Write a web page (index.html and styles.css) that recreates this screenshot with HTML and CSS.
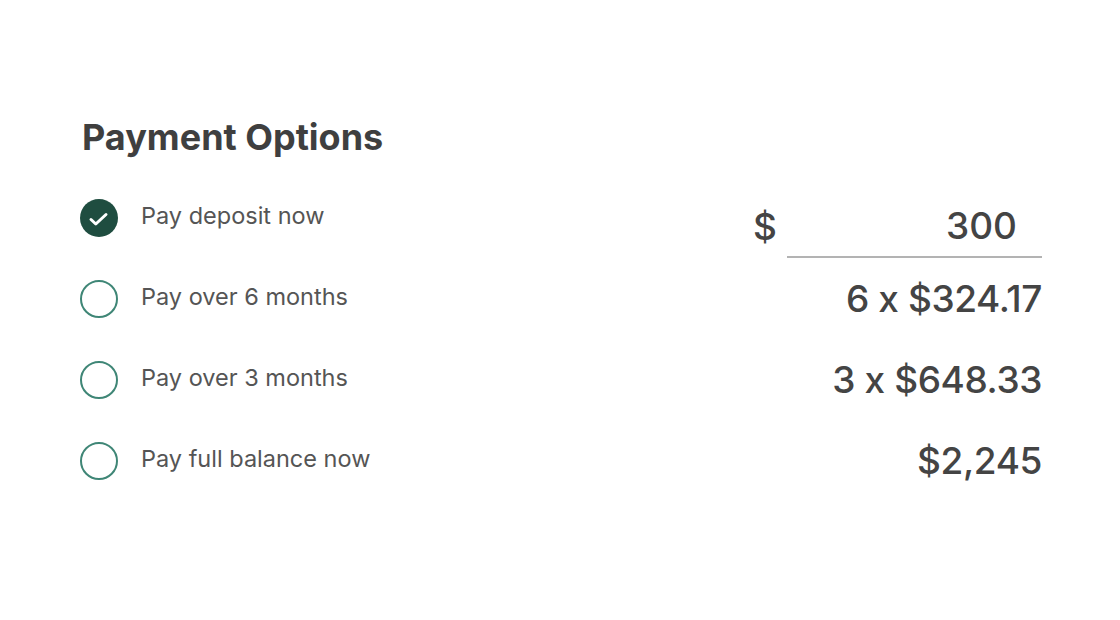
FILE: index.html
```html
<!DOCTYPE html>
<html>
<head>
<meta charset="utf-8">
<link rel="stylesheet" href="styles.css">
</head>
<body>
<div class="panel">
  <h1 class="title">Payment Options</h1>
  <div class="options">
    <div class="row">
      <div class="opt">
        <span class="radio checked">
          <svg viewBox="0 0 38 38" width="38" height="38"><circle cx="19" cy="19" r="19" fill="#1f4d40"/><path d="M11 20.5 L15.8 25 L26 15.5" fill="none" stroke="#fff" stroke-width="3" stroke-linecap="round" stroke-linejoin="round"/></svg>
        </span>
        <span class="label">Pay deposit now</span>
      </div>
      <div class="deposit">
        <span class="cur">$</span>
        <span class="field">300</span>
      </div>
    </div>
    <div class="row">
      <div class="opt"><span class="radio"></span><span class="label">Pay over 6 months</span></div>
      <div class="value">6 x $324.17</div>
    </div>
    <div class="row">
      <div class="opt"><span class="radio"></span><span class="label">Pay over 3 months</span></div>
      <div class="value">3 x $648.33</div>
    </div>
    <div class="row">
      <div class="opt"><span class="radio"></span><span class="label">Pay full balance now</span></div>
      <div class="value">$2,245</div>
    </div>
  </div>
</div>
</body>
</html>
```
FILE: styles.css
```css
html, body {
  margin: 0;
  padding: 0;
  background: #fff;
}
body {
  font-family: Inter, "Noto Sans", sans-serif;
  color: #444;
}
.panel {
  width: 962px;
  padding: 115px 0 0 80px;
}
.title {
  margin: 0 0 18px 2px;
  font-size: 36px;
  font-weight: 700;
  line-height: 44px;
  color: #3f3f3f;
}
.options {
  display: flex;
  flex-direction: column;
}
.row {
  display: flex;
  align-items: center;
  justify-content: space-between;
  height: 81px;
}
.opt {
  display: flex;
  align-items: center;
  gap: 23px;
}
.radio {
  width: 38px;
  height: 38px;
  box-sizing: border-box;
  border: 2px solid #3f8676;
  border-radius: 50%;
  display: block;
  flex: none;
}
.radio.checked {
  border: none;
}
.radio svg {
  display: block;
}
.label {
  font-size: 23.5px;
  line-height: 30px;
  color: #555;
  position: relative;
  top: -2px;
}
.value {
  font-size: 37px;
  font-weight: 500;
  line-height: 44px;
  color: #444;
  letter-spacing: -0.4px;
}
.deposit {
  display: flex;
  align-items: center;
  gap: 10px;
  margin-top: 26px;
}
.cur {
  font-size: 37px;
  font-weight: 500;
  line-height: 44px;
  color: #444;
  position: relative;
  top: -4px;
}
.field {
  width: 255px;
  box-sizing: border-box;
  text-align: right;
  padding: 0 25px 8px 0;
  font-size: 37px;
  font-weight: 500;
  line-height: 44px;
  border-bottom: 2px solid #b3b3b3;
  color: #444;
}
```
